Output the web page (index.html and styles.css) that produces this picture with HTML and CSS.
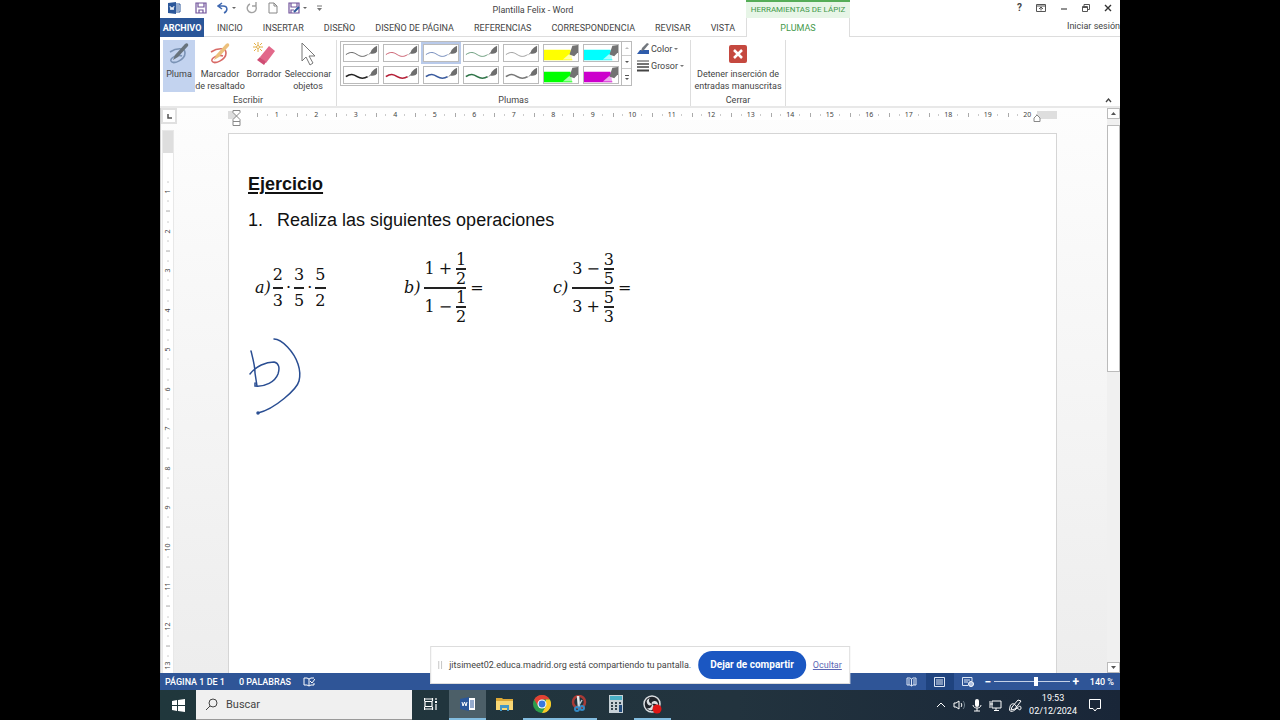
FILE: index.html
```html
<!DOCTYPE html>
<html lang="es">
<head>
<meta charset="utf-8">
<meta name="viewport" content="width=device-width, initial-scale=1">
<title>Plantilla Felix - Word</title>
<link rel="stylesheet" href="styles.css">
</head>
<body>
<svg class="symbols" aria-hidden="true">
  <symbol id="stroke" viewBox="0 0 36 20" preserveAspectRatio="none">
    <path d="M2 12C7 8 10 9 14 12S21 15 25 12" fill="none" stroke="currentColor" stroke-width="var(--w)"/>
    <path d="M26 12l3-3" stroke="#777" stroke-width="1"/>
    <path d="M28 11c0-4 3-8 7-10v7c-2 3-4 3-7 3z" fill="#6e6e6e"/>
  </symbol>
  <symbol id="marker" viewBox="0 0 36 20" preserveAspectRatio="none">
    <path d="M0 6H28L30 19H0z" fill="currentColor"/>
    <path d="M20 18l7-7 5 4-2 3z" fill="#fff" fill-opacity=".65"/>
    <path d="M27 12L30 1l6-1v9l-4 5z" fill="#737373"/>
  </symbol>
  <symbol id="pen" viewBox="0 0 24 24">
    <path d="M3 10c6-4 15-5 15 1 0 7-12 12-14 8-1-3 6-7 11-5" fill="none" stroke="var(--ring)" stroke-width="1.6"/>
    <path d="M6 18l2-5L18 2c2-2 4 0 3 2L11 15z" fill="var(--body)"/>
  </symbol>
</svg>

<main class="screen">
  <header class="top">
    <div class="titlebar">
      <nav class="quick" aria-label="Acceso rápido">
        <svg width="13" height="12" viewBox="0 0 13 12"><path d="M6 2h6v8H6z" fill="#fff" stroke="#2b579a"/><path d="M8 4h3M8 6h3M8 8h3" stroke="#2b579a"/><path d="M0 1l8-1v12l-8-1z" fill="#2b579a"/><path d="M2 4l1 4 1-3 1 3 1-4" fill="none" stroke="#fff" stroke-width=".9"/></svg>
        <button aria-label="Guardar"><svg width="12" height="12" viewBox="0 0 12 12"><path d="M1 1h10v10H1zM3 1v4h6V1M4 11V8h4v3" fill="none" stroke="#70529a" stroke-width="1.2"/></svg></button>
        <button aria-label="Deshacer"><svg width="19" height="12" viewBox="0 0 19 12"><path d="M5 1L1 4l4 3M1 4h5c5 0 5 5 1 7" fill="none" stroke="#3f68b0" stroke-width="1.5"/><path d="M15 5h4l-2 2z" fill="#666"/></svg></button>
        <button aria-label="Repetir"><svg width="12" height="12" viewBox="0 0 12 12"><path d="M4 2a4.500 4.500 0 1 0 5 1M10 0v4H6" fill="none" stroke="#a2a2a2" stroke-width="1.400"/></svg></button>
        <button aria-label="Nuevo"><svg width="10" height="12" viewBox="0 0 10 12"><path d="M1 1h5l3 3v7H1zM6 1v3h3" fill="none" stroke="#888"/></svg></button>
        <button aria-label="Guardar como"><svg width="19" height="12" viewBox="0 0 19 12"><path d="M1 1h10v10H1zM3 1v4h6V1M3 11V8h3" fill="none" stroke="#70529a" stroke-width="1.200"/><path d="M6 10l5-5" stroke="#2b579a" stroke-width="2"/><path d="M15 5h4l-2 2z" fill="#666"/></svg></button>
        <button aria-label="Personalizar"><svg width="5" height="8" viewBox="0 0 5 8"><path d="M0 2h5" stroke="#777"/><path d="M0 4h5L2.500 7z" fill="#777"/></svg></button>
      </nav>
      <h1 class="title">Plantilla Felix - Word</h1>
      <div class="context">HERRAMIENTAS DE LÁPIZ</div>
      <div class="window-buttons">
        <button aria-label="Ayuda" class="help">?</button>
        <button aria-label="Opciones de cinta"><svg width="10" height="8" viewBox="0 0 10 8"><path d="M.5.500h9v7h-9zM0 2h10M5 6.500V3M3 5l2-2 2 2" fill="none" stroke="#555"/></svg></button>
        <button aria-label="Minimizar"><svg width="8" height="8" viewBox="0 0 8 8"><path d="M1 5h6" stroke="#555" stroke-width="1.300"/></svg></button>
        <button aria-label="Restaurar"><svg width="8" height="8" viewBox="0 0 8 8"><path d="M.5 2.500h5v5h-5zM2 2V.500h5.500v5H6M.500 3.500h5" fill="none" stroke="#555"/></svg></button>
        <button aria-label="Cerrar"><svg width="8" height="8" viewBox="0 0 8 8"><path d="M1 1l6 6M7 1L1 7" stroke="#333" stroke-width="1.400"/></svg></button>
      </div>
    </div>
    <div class="tabs">
      <nav class="tablist">
        <button class="file">ARCHIVO</button>
        <button>INICIO</button>
        <button>INSERTAR</button>
        <button>DISEÑO</button>
        <button>DISEÑO DE PÁGINA</button>
        <button>REFERENCIAS</button>
        <button>CORRESPONDENCIA</button>
        <button>REVISAR</button>
        <button>VISTA</button>
      </nav>
      <button class="active">PLUMAS</button>
      <a class="login" href="#">Iniciar sesión</a>
    </div>
  </header>

  <section class="ribbon" aria-label="Plumas">
    <div class="group">
      <div class="tools">
        <button class="tool narrow selected"><svg class="pen" width="24" height="24"><use href="#pen"/></svg>Pluma</button>
        <button class="tool wide"><svg class="pen highlight" width="24" height="24"><use href="#pen"/></svg>Marcador<br>de resaltado</button>
        <button class="tool medium"><svg width="24" height="24" viewBox="0 0 24 24"><path d="M8 15L17 4l6 5-9 12z" fill="#e2688a"/><path d="M8 15l6 5-2 3-7-5z" fill="#cf4d73"/><path d="M6 0v3M6 7v3M1 5h3M8 5h3M2 1l2 2M8 7l2 2M10 1L8 3M4 7L2 9" stroke="#e2b04a"/><circle cx="6" cy="5" r="1.500" fill="#fff" stroke="#e2b04a"/></svg>Borrador</button>
        <button class="tool wide"><svg width="24" height="24" viewBox="0 0 24 24"><path d="M6 1v18l4-4 4 8 3-2-4-7h6z" fill="#fff" stroke="#777"/></svg>Seleccionar<br>objetos</button>
      </div>
      <div class="group-name">Escribir</div>
    </div>
    <div class="group pens">
      <div class="tools">
        <div class="gallery">
          <div class="swatches">
            <button aria-label="Pluma negra fina" class="thin black"><svg><use href="#stroke"/></svg></button>
            <button aria-label="Pluma roja fina" class="thin red"><svg><use href="#stroke"/></svg></button>
            <button aria-label="Pluma azul fina" class="thin blue chosen"><svg><use href="#stroke"/></svg></button>
            <button aria-label="Pluma verde fina" class="thin green"><svg><use href="#stroke"/></svg></button>
            <button aria-label="Pluma gris fina" class="thin gray"><svg><use href="#stroke"/></svg></button>
            <button aria-label="Marcador amarillo" class="yellow"><svg><use href="#marker"/></svg></button>
            <button aria-label="Marcador turquesa" class="cyan"><svg><use href="#marker"/></svg></button>
            <button aria-label="Pluma negra" class="black"><svg><use href="#stroke"/></svg></button>
            <button aria-label="Pluma roja" class="red"><svg><use href="#stroke"/></svg></button>
            <button aria-label="Pluma azul" class="blue"><svg><use href="#stroke"/></svg></button>
            <button aria-label="Pluma verde" class="green"><svg><use href="#stroke"/></svg></button>
            <button aria-label="Pluma gris" class="gray"><svg><use href="#stroke"/></svg></button>
            <button aria-label="Marcador verde" class="lime"><svg><use href="#marker"/></svg></button>
            <button aria-label="Marcador magenta" class="magenta"><svg><use href="#marker"/></svg></button>
          </div>
          <div class="gallery-scroll">
            <button aria-label="Subir" class="off"><svg width="4" height="2" viewBox="0 0 4 2"><path d="M0 2l2-2 2 2z" fill="#bbb"/></svg></button>
            <button aria-label="Bajar"><svg width="4" height="2" viewBox="0 0 4 2"><path d="M0 0h4L2 2z" fill="#555"/></svg></button>
            <button aria-label="Más"><svg width="4" height="5" viewBox="0 0 4 5"><path d="M0 0h4v1H0zM0 3h4L2 5z" fill="#555"/></svg></button>
          </div>
        </div>
        <div class="options">
          <button><svg width="12" height="12" viewBox="0 0 12 12"><path d="M0 11l3-4h9v4z" fill="#2f5cab"/><path d="M4 8l1-3 5-5 2 1-5 6z" fill="#72777d"/></svg>Color<i class="caret"></i></button>
          <button><svg width="12" height="12" viewBox="0 0 12 12"><path d="M0 1h12" stroke="#444"/><path d="M0 4h12M0 7h12" stroke="#444" stroke-width="1.500"/><path d="M0 10.500h12" stroke="#444" stroke-width="2"/></svg>Grosor<i class="caret"></i></button>
        </div>
      </div>
      <div class="group-name">Plumas</div>
    </div>
    <div class="group">
      <div class="tools">
        <button class="tool stop"><svg width="24" height="24" viewBox="0 0 24 24"><rect x="3" y="3" width="18" height="18" rx="2" fill="#c5483f"/><path d="M8 8l8 8M16 8l-8 8" stroke="#fff" stroke-width="2.500"/></svg>Detener inserción de<br>entradas manuscritas</button>
      </div>
      <div class="group-name">Cerrar</div>
    </div>
    <button class="collapse" aria-label="Contraer cinta"><svg width="7" height="5" viewBox="0 0 7 5"><path d="M1 4l2.500-3L6 4" fill="none" stroke="#444" stroke-width="1.300"/></svg></button>
  </section>

  <section class="workspace">
    <div class="left-ruler">
      <div class="tab-stop"><svg width="5" height="5" viewBox="0 0 5 5"><path d="M1 0v4h4" fill="none" stroke="#555" stroke-width="1.500"/></svg></div>
      <div class="v-ruler">
        <div class="v-margin"></div>
        <div class="v-scale"><span>1</span><span>2</span><span>3</span><span>4</span><span>5</span><span>6</span><span>7</span><span>8</span><span>9</span><span>10</span><span>11</span><span>12</span><span>13</span></div>
      </div>
    </div>
    <div class="canvas">
      <div class="h-ruler">
        <div class="h-start"><svg width="9" height="16" viewBox="0 0 9 16"><path d="M1 .500h7v2L4.500 6 1 2.500zM4.500 6L8 9.500v2H1v-2zM1 11.500h7v4H1z" fill="#fff" stroke="#888"/></svg></div>
        <div class="h-scale"><span>1</span><span>2</span><span>3</span><span>4</span><span>5</span><span>6</span><span>7</span><span>8</span><span>9</span><span>10</span><span>11</span><span>12</span><span>13</span><span>14</span><span>15</span><span>16</span><span>17</span><span>18</span><span>19</span><span>20</span></div>
        <div class="h-end"><svg width="8" height="8" viewBox="0 0 8 8"><path d="M1 7.500V4l3-3 3 3v3.500z" fill="#fff" stroke="#888"/></svg></div>
      </div>
      <article class="page">
        <h2>Ejercicio</h2>
        <p class="statement"><span>1.</span><span>Realiza las siguientes operaciones</span></p>
        <div class="exercises">
          <div class="math">
            <i>a)</i><span class="frac"><span>2</span><span>3</span></span><b>·</b><span class="frac"><span>3</span><span>5</span></span><b>·</b><span class="frac"><span>5</span><span>2</span></span>
          </div>
          <div class="math">
            <i>b)</i><span class="frac big"><span>1<em>+</em><span class="frac small"><span>1</span><span>2</span></span></span><span>1<em>−</em><span class="frac small"><span>1</span><span>2</span></span></span></span><em>=</em>
          </div>
          <div class="math">
            <i>c)</i><span class="frac big"><span>3<em>−</em><span class="frac small"><span>3</span><span>5</span></span></span><span>3<em>+</em><span class="frac small"><span>5</span><span>3</span></span></span></span><em>=</em>
          </div>
        </div>
        <svg class="ink" width="56" height="80" viewBox="248 336 56 80" role="img" aria-label="b) manuscrita"><path d="M251 351c2 8 4 15 4 22l2 13M250 374c6-8 16-12 24-12 5 1 6 6 4 12-3 8-13 13-23 12l0-3" /><path d="M274 339c8 0 20 13 24 25 2 6 2 13 1 17-2 8-24 28-41 32"/><circle cx="258" cy="413" r="1"/></svg>
      </article>
    </div>
    <div class="scrollbar">
      <button aria-label="Subir"><svg width="5" height="3" viewBox="0 0 5 3"><path d="M0 3l2.500-3L5 3z" fill="#555"/></svg></button>
      <div class="track"><div class="thumb"></div></div>
      <button aria-label="Bajar"><svg width="5" height="3" viewBox="0 0 5 3"><path d="M0 0h5L2.500 3z" fill="#555"/></svg></button>
    </div>
  </section>

  <footer class="status">
    <span>PÁGINA 1 DE 1</span>
    <span>0 PALABRAS</span>
    <svg width="12" height="10" viewBox="0 0 12 10"><path d="M6 9L4 8H1V1h3l2 1 2-1h3M6 2v7l2-1h3V6M7 4l2 2 3-4" fill="none" stroke="#fff"/></svg>
    <div class="status-right">
      <button aria-label="Modo lectura"><svg width="11" height="10" viewBox="0 0 11 10"><path d="M5.500 2L4 1H1v7h3l1.500 1L7 8h3V1H7zM5.500 2v7M2 3h2M2 5h2M2 7h2M7 3h2M7 5h2M7 7h2" fill="none" stroke="#dce6f5"/></svg></button>
      <button aria-label="Diseño de impresión" class="on"><svg width="11" height="10" viewBox="0 0 11 10"><path d="M.500.500h10v9H.500zM2 3h7M2 5h7M2 7h7" fill="none" stroke="#dce6f5"/></svg></button>
      <button aria-label="Diseño web"><svg width="12" height="10" viewBox="0 0 12 10"><path d="M10 4V.500H.500v8H6M2 3h6M2 5h4" fill="none" stroke="#dce6f5"/><circle cx="9" cy="7" r="2.500" fill="#aebfdf" stroke="#fff"/></svg></button>
      <button aria-label="Alejar" class="zoom-button">−</button>
      <input type="range" class="zoom" aria-label="Zoom" min="0" max="100" value="56">
      <button aria-label="Acercar" class="zoom-button">+</button>
      <span class="percent">140 %</span>
    </div>
  </footer>

  <footer class="taskbar">
    <button class="start" aria-label="Inicio"><svg width="13" height="13" viewBox="0 0 13 13"><path d="M0 2l5-1v5H0zM6 1l7-1v6H6zM0 7h5v5l-5-1zM6 7h7v6l-7-1z" fill="#fff"/></svg></button>
    <label class="search"><svg width="13" height="13" viewBox="0 0 13 13"><circle cx="8" cy="5" r="4" fill="none" stroke="#444"/><path d="M5 8l-4 4" stroke="#444"/></svg><input type="text" placeholder="Buscar" aria-label="Buscar"></label>
    <nav class="apps">
      <button aria-label="Vista de tareas"><svg width="14" height="12" viewBox="0 0 14 12"><path d="M0 1h9M0 11h9M1 3.500h7v5H1zM.500 0v3M.500 9v3M8.500 0v3M8.500 9v3M12 0v2M12 6v6" fill="none" stroke="#fff" stroke-width="1.200"/><path d="M11 3h2v2h-2z" fill="#fff"/></svg></button>
      <button class="current open" aria-label="Word"><svg width="16" height="14" viewBox="0 0 16 14"><path d="M8 1h7v12H8z" fill="#fff"/><path d="M10 4h4M10 6h4M10 8h4M10 10h4" stroke="#2b579a"/><path d="M0 2l9-2v14l-9-2z" fill="#2b579a"/><path d="M2 5l1 4 1.500-4L6 9l1-4" fill="none" stroke="#fff"/></svg></button>
      <button aria-label="Explorador"><svg width="17" height="14" viewBox="0 0 17 14"><path d="M0 1h6l1 1h10v11H0z" fill="#dba736"/><path d="M0 4h17v9H0z" fill="#f8d775"/><path d="M4 8h9v6h-2v-3H6v3H4z" fill="#4598c6"/></svg></button>
      <button class="open" aria-label="Chrome"><svg width="18" height="18" viewBox="0 0 18 18"><circle cx="9" cy="9" r="9" fill="#2d9d4b"/><path d="M1.200 4.500A9 9 0 0 1 16.800 4.500H9L5 11z" fill="#e34133"/><path d="M16.800 4.500A9 9 0 0 1 9 18l4-7V4.500z" fill="#f9c929"/><circle cx="9" cy="9" r="4.500" fill="#fff"/><circle cx="9" cy="9" r="3.400" fill="#3878df"/></svg></button>
      <button class="open" aria-label="Recortes"><svg width="16" height="18" viewBox="0 0 16 18"><circle cx="8" cy="7" r="6" fill="none" stroke="#a83a36" stroke-width="2.500"/><path d="M7 1l1 11" stroke="#e3e9ed" stroke-width="2.500"/><path d="M11 5L7 12" stroke="#b9c6ce" stroke-width="1.500"/><circle cx="6" cy="14" r="2" fill="none" stroke="#348ac4" stroke-width="2"/><circle cx="11" cy="13" r="2" fill="none" stroke="#348ac4" stroke-width="2"/></svg></button>
      <button aria-label="Calculadora"><svg width="14" height="18" viewBox="0 0 14 18"><path d="M0 0h14v18H0z" fill="#c6d0d6"/><path d="M1 1h12v4H1z" fill="#4aafc5"/><path d="M2 8h2M6 8h2M10 8h2M2 11h2M6 11h2M2 14h2M6 14h2" stroke="#33444f" stroke-width="2"/><path d="M10 10h3v7h-3z" fill="#214b7c"/></svg></button>
      <button class="open" aria-label="OBS"><svg width="19" height="19" viewBox="0 0 19 19"><circle cx="9" cy="9" r="8" fill="#20242a" stroke="#d9dde0" stroke-width="1.500"/><path d="M9 9C6 8 5 5 7 3c-3 1-4 3-3 5 1 3 4 3 5 1zM9 9c3-1 5 0 6 3 1-3-1-6-3-6s-4 1-3 3zM9 9c0 3-2 5-5 4 2 3 5 3 6 1s1-4-1-5z" fill="#dadfe2"/><circle cx="14" cy="14" r="4.500" fill="#df1515"/></svg></button>
    </nav>
    <div class="tray">
      <svg width="10" height="6" viewBox="0 0 10 6"><path d="M1 5l4-4 4 4" fill="none" stroke="#fff"/></svg>
      <svg width="12" height="10" viewBox="0 0 12 10"><path d="M1 3h2l3-2v8L3 7H1zM8 3c1 1 1 3 0 4" fill="none" stroke="#fff"/><path d="M10 1c2 2 2 6 0 8" fill="none" stroke="#70808c"/></svg>
      <svg width="10" height="13" viewBox="0 0 10 13"><rect x="3" y="0" width="4" height="8" rx="2" fill="#fff"/><path d="M1 6c0 4 8 4 8 0M5 9v3M2 12h6" fill="none" stroke="#fff"/></svg>
      <svg width="13" height="11" viewBox="0 0 13 11"><path d="M3 1h9v7H3zM5 10.500h5M7 8v3M1 1v3h3M1 4v4" fill="none" stroke="#fff"/></svg>
      <svg width="13" height="13" viewBox="0 0 13 13"><path d="M3 8l6-7 3 1-6 8-4 1zM1 8c-2 6 3 5 6 2s5-4 5-1-3 2-5-2S1 5 1 8" fill="none" stroke="#fff"/></svg>
      <div class="clock"><time>19:53</time><time>02/12/2024</time></div>
      <svg width="12" height="13" viewBox="0 0 12 13"><path d="M.500.500h11v9H8L6 12 4 9.500H.500z" fill="none" stroke="#fff"/></svg>
    </div>
  </footer>

  <aside class="share">
    <svg width="4" height="8" viewBox="0 0 4 8"><path d="M.500 0v8M3.500 0v8" stroke="#bbb"/></svg>
    <span>jitsimeet02.educa.madrid.org está compartiendo tu pantalla.</span>
    <button>Dejar de compartir</button>
    <a href="#">Ocultar</a>
  </aside>
</main>
</body>
</html>
```
FILE: styles.css
```css
* { box-sizing: border-box; }

body {
  margin: 0;
  background: #000;
  font: 9px/12px Roboto, "Open Sans", sans-serif;
  color: #444;
}

button {
  margin: 0;
  padding: 0;
  border: 0;
  background: none;
  font: inherit;
  color: inherit;
  white-space: nowrap;
}

svg { display: block; flex: none; }
.symbols { position: absolute; width: 0; height: 0; }

.screen {
  --lead: 586px;
  position: relative;
  display: flex;
  flex-direction: column;
  width: 75%;
  height: 100vh;
  margin: 0 auto;
  overflow: hidden;
  background: #fff;
}

/* Title bar and tabs */
.top { border-bottom: 1px solid #ddd; }
.titlebar { display: flex; height: 18px; }
.quick {
  display: flex;
  align-items: center;
  gap: 14px;
  width: 160px;
  padding: 0 0 2px 8px;
}
.quick button:nth-child(n+3) { margin-left: -4px; }
.title {
  flex: 0 0 426px;
  margin: 0;
  font-size: 9px;
  font-weight: 400;
  line-height: 20px;
  text-align: center;
}
.context {
  width: 104px;
  border-top: 2px solid #55ad57;
  background: #e7f5e7;
  color: #43994a;
  font-size: 8px;
  line-height: 16px;
  text-align: center;
  white-space: nowrap;
}
.window-buttons {
  display: flex;
  align-items: center;
  gap: 14px;
  margin-left: auto;
  padding: 0 8px 2px 0;
}
.help { font-size: 10px; font-weight: 700; }
.tabs { display: flex; height: 19px; margin-bottom: -1px; line-height: 20px; }
.tablist { display: flex; width: var(--lead); }
.tablist button { flex: none; padding: 0 10px; }
.tablist .file {
  width: 44px;
  margin-right: 3px;
  padding: 0;
  background: #2a5699;
  color: #fff;
  font-weight: 700;
}
.tabs .active {
  width: 104px;
  border: solid #ddd;
  border-width: 0 1px;
  background: #fff;
  color: #43994a;
}
.login {
  margin-left: auto;
  color: inherit;
  line-height: 16px;
  text-decoration: none;
  white-space: nowrap;
}

/* Ribbon */
.ribbon {
  display: flex;
  height: 71px;
  padding-top: 3px;
  border-bottom: 2px solid #e8e8e8;
}
.group {
  display: flex;
  flex-direction: column;
  justify-content: space-between;
  padding: 0 3px;
  border-right: 1px solid #ddd;
}
.tools { display: flex; }
.group-name { text-align: center; }
.tool {
  display: flex;
  flex-direction: column;
  align-items: center;
  height: 52px;
  padding-top: 2px;
}
.tool svg { margin-bottom: 2px; }
.narrow { width: 32px; }
.medium { width: 38px; }
.wide { width: 50px; }
.stop { width: 88px; }
.selected { background: #c3d3ef; }
.pen { --ring: #7b93b5; --body: #68737c; }
.highlight { --ring: #d86a66; --body: #ecc07c; }
.pens { width: 354px; }
.gallery {
  display: flex;
  height: 45px;
  margin: 1px 5px 0 0;
  border: 1px solid #bbb;
}
.swatches {
  display: grid;
  grid-template-columns: repeat(7, 40px);
  grid-template-rows: 22px 21px;
}
.swatches button {
  --w: 1.8;
  padding: 1px;
  border: 1px solid transparent;
}
.swatches svg { width: 36px; height: 18px; border: 1px solid #bbb; }
.swatches .chosen { border-color: #b9caea; background: #b9caea; }
.chosen svg { background: #fff; }
.swatches .thin { --w: .8; }
.black { color: #222; }
.red { color: #b51f37; }
.blue { color: #3a5b9e; }
.green { color: #2f7448; }
.gray { color: #777; }
.yellow { color: #ff0; }
.cyan { color: #0ff; }
.lime { color: #0f0; }
.magenta { color: #c0c; }
.gallery-scroll { display: grid; width: 10px; border-left: 1px solid #bbb; }
.gallery-scroll button { display: grid; place-items: center; }
.gallery-scroll button + button { border-top: 1px solid #ccc; }
.options { display: flex; flex-direction: column; gap: 5px; padding-top: 3px; }
.options button { display: flex; gap: 2px; align-items: center; }
.caret { border: 2px solid transparent; border-top-color: #777; border-bottom: 0; }
.collapse { align-self: flex-end; margin: 0 8px 3px auto; }

/* Rulers, page and scrollbar */
.workspace {
  display: flex;
  flex: 1;
  min-height: 0;
  overflow: hidden;
  background: linear-gradient(#fdfdfd, #ededed);
}
.left-ruler { display: flex; flex-direction: column; width: 17px; border-left: 1px solid #ccc; }
.tab-stop {
  display: grid;
  place-items: center;
  height: 16px;
  border: 2px solid #e0e0e0;
  background: #fff;
}
.v-ruler {
  flex: 1;
  width: 10px;
  min-height: 0;
  margin: 7px 0 0 2px;
  overflow: hidden;
  background: #fff;
  outline: 1px solid #e8e8e8;
}
.v-margin { height: 22px; margin-bottom: 19px; background: #dedede; }
.v-scale { display: grid; grid-template-rows: repeat(13, 1fr); height: 514px; }
.v-scale span,
.h-scale span {
  font-family: "Noto Sans", sans-serif;
  font-size: 7px;
  line-height: 10px;
  text-align: center;
}
.v-scale span {
  writing-mode: vertical-rl;
  transform: rotate(180deg);
  background:
    linear-gradient(#aaa, #aaa) center top / 4px 1px no-repeat,
    linear-gradient(#ccc, #ccc) center 25% / 2px 1px no-repeat,
    linear-gradient(#ccc, #ccc) center 75% / 2px 1px no-repeat;
}
.canvas { flex: 1; padding: 2px 50px 0 51px; }
.h-ruler { display: flex; height: 16px; margin-bottom: 7px; }
.h-start, .h-end { height: 8px; margin-top: 1px; background: #dedede; }
.h-start { z-index: 1; width: 9px; }
.h-start svg { margin: -1px 0 0 4px; }
.h-end { width: 20px; }
.h-end svg { margin: 3px 0 0 -4px; }
.h-scale {
  display: grid;
  grid-template-columns: repeat(20, 1fr);
  flex: 1;
  height: 10px;
  padding-left: 20px;
  margin-right: -10px;
  background: #fff;
}
.h-scale span {
  background:
    linear-gradient(#aaa, #aaa) left center / 1px 4px no-repeat,
    linear-gradient(#ccc, #ccc) 25% center / 1px 2px no-repeat,
    linear-gradient(#ccc, #ccc) 75% center / 1px 2px no-repeat;
}
.page {
  height: 100%;
  padding: 40px 19px;
  border: 1px solid #d5d5d5;
  background: #fff;
  color: #111;
  font: 18px/20px "Liberation Sans", Arial, sans-serif;
}
.page h2 {
  margin: 0 0 16px;
  font-size: 18px;
  text-decoration: underline;
  text-decoration-thickness: 2px;
  text-underline-offset: 2px;
}
.statement { display: flex; gap: 14px; margin: 0; }
.exercises {
  display: grid;
  grid-template-columns: 149px 149px 149px;
  margin: 22px 0 0 7px;
}
.math {
  display: flex;
  align-items: center;
  height: 72px;
  font: 16px/24px "DejaVu Serif", serif;
}
.math i { margin-right: 2px; }
.math b { padding: 0 3px; font-weight: 400; }
.math em { padding: 0 4px; font-style: normal; }
.frac { display: inline-flex; flex-direction: column; align-items: stretch; text-align: center; }
.frac > span + span { border-top: 2px solid #222; }
.big { margin-left: 2px; }
.big > span { display: flex; align-items: center; height: 36px; }
.big > span + span { height: 38px; }
.small { line-height: 17px; }
.ink { margin-top: 12px; fill: none; stroke: #294d92; stroke-width: 1.5; stroke-linecap: round; }
.scrollbar { display: flex; flex-direction: column; width: 13px; background: #f0f0f0; }
.scrollbar button {
  display: grid;
  place-items: center;
  height: 11px;
  border: 1px solid #bbb;
  background: #fff;
}
.track { flex: 1; padding-top: 6px; }
.thumb { height: 46%; border: 1px solid #bbb; background: #fff; }

/* Status bar */
.status {
  display: flex;
  align-items: center;
  gap: 14px;
  height: 17px;
  padding: 0 6px 0 5px;
  background: #2f5597;
  color: #fff;
  font-weight: 500;
}
.status > svg { margin-left: -2px; }
.status-right { display: flex; align-items: center; height: 100%; margin-left: auto; }
.status-right button { display: grid; place-items: center; width: 28px; height: 100%; }
.status-right .on { background: #1f437e; }
.status-right .zoom-button { width: 12px; font-size: 12px; font-weight: 700; }
.zoom {
  width: 76px;
  height: 10px;
  margin: 0;
  appearance: none;
  background: linear-gradient(#c4d1e7, #c4d1e7) center / 100% 1px no-repeat;
}
.zoom::-webkit-slider-thumb { appearance: none; width: 4px; height: 9px; background: #fff; }
.percent { margin-left: 8px; }

/* Taskbar */
.taskbar {
  display: flex;
  height: 30px;
  background: linear-gradient(90deg, #20373c, #22333e 60%, #192638);
  color: #fff;
}
.start { display: grid; place-items: center; width: 36px; }
.search {
  display: flex;
  align-items: center;
  gap: 8px;
  width: 216px;
  padding-left: 9px;
  border-bottom: 1px solid #999;
  background: #f0f0f0;
}
.search input {
  width: 100%;
  padding: 0;
  border: 0;
  outline: 0;
  background: none;
  font: 11px/16px Roboto, sans-serif;
}
.search input::placeholder { color: #444; }
.apps { display: flex; }
.apps button {
  display: grid;
  place-items: center;
  width: 37px;
  border-bottom: 2px solid transparent;
}
.apps .open { border-color: #83bde0; }
.apps .current { background: #4c5f68; }
.tray {
  display: flex;
  align-items: center;
  gap: 7px;
  margin-left: auto;
  padding-right: 19px;
}
.clock { display: flex; flex-direction: column; align-items: center; margin-right: 5px; line-height: 13px; }

/* Screen-sharing notice */
.share {
  position: absolute;
  bottom: 36px;
  left: 50%;
  transform: translateX(-50%);
  display: flex;
  align-items: center;
  gap: 7px;
  height: 38px;
  padding: 0 7px;
  border: 1px solid #ddd;
  background: #fff;
  white-space: nowrap;
}
.share button {
  height: 28px;
  padding: 0 12px;
  border-radius: 14px;
  background: #1b57c2;
  color: #fff;
  font-size: 10px;
  font-weight: 700;
}
.share a { color: #5c68b5; }
```
